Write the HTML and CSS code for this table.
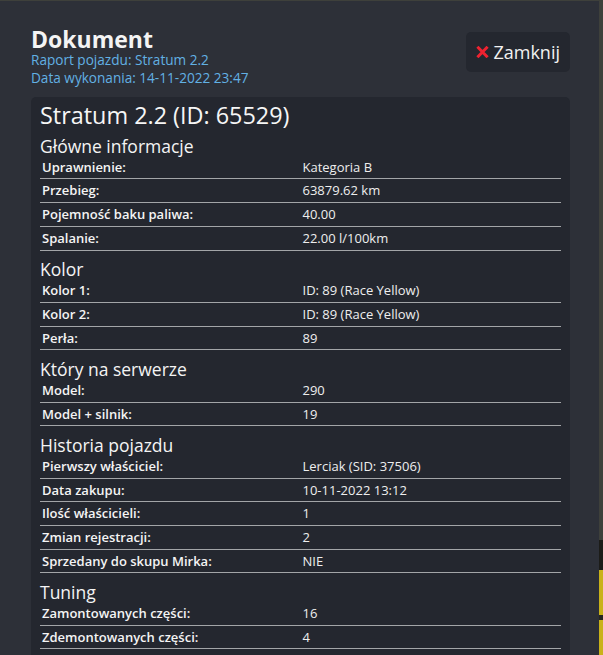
FILE: index.html
```html
<!DOCTYPE html>
<html lang="pl">
<head>
<meta charset="utf-8">
<title>Dokument</title>
<link rel="stylesheet" href="styles.css">
</head>
<body>
<div class="modal">
  <header class="modal-head">
    <div class="titles">
      <h1 class="title">Dokument</h1>
      <p class="sub">Raport pojazdu: Stratum 2.2</p>
      <p class="sub">Data wykonania: 14-11-2022 23:47</p>
    </div>
    <button class="close" type="button">
      <svg class="close-icon" viewBox="0 0 13 12" width="13" height="12" aria-hidden="true"><path d="M1.4 0.8 L11.6 11.2 M11.6 0.8 L1.4 11.2" /></svg>
      <span>Zamknij</span>
    </button>
  </header>
  <div class="doc">
    <h2 class="doc-title">Stratum 2.2 (ID: 65529)</h2>
    <section class="sec first">
      <h3 class="sec-title">Główne informacje</h3>
      <div class="info">
        <div class="row"><span class="k">Uprawnienie:</span><span class="v">Kategoria B</span></div>
        <div class="row"><span class="k">Przebieg:</span><span class="v">63879.62 km</span></div>
        <div class="row"><span class="k">Pojemność baku paliwa:</span><span class="v">40.00</span></div>
        <div class="row"><span class="k">Spalanie:</span><span class="v">22.00 l/100km</span></div>
      </div>
    </section>
    <section class="sec">
      <h3 class="sec-title">Kolor</h3>
      <div class="info">
        <div class="row"><span class="k">Kolor 1:</span><span class="v">ID: 89 (Race Yellow)</span></div>
        <div class="row"><span class="k">Kolor 2:</span><span class="v">ID: 89 (Race Yellow)</span></div>
        <div class="row"><span class="k">Perła:</span><span class="v">89</span></div>
      </div>
    </section>
    <section class="sec">
      <h3 class="sec-title">Który na serwerze</h3>
      <div class="info">
        <div class="row"><span class="k">Model:</span><span class="v">290</span></div>
        <div class="row"><span class="k">Model + silnik:</span><span class="v">19</span></div>
      </div>
    </section>
    <section class="sec">
      <h3 class="sec-title">Historia pojazdu</h3>
      <div class="info">
        <div class="row"><span class="k">Pierwszy właściciel:</span><span class="v">Lerciak (SID: 37506)</span></div>
        <div class="row"><span class="k">Data zakupu:</span><span class="v">10-11-2022 13:12</span></div>
        <div class="row"><span class="k">Ilość właścicieli:</span><span class="v">1</span></div>
        <div class="row"><span class="k">Zmian rejestracji:</span><span class="v">2</span></div>
        <div class="row"><span class="k">Sprzedany do skupu Mirka:</span><span class="v">NIE</span></div>
      </div>
    </section>
    <section class="sec">
      <h3 class="sec-title">Tuning</h3>
      <div class="info">
        <div class="row"><span class="k">Zamontowanych części:</span><span class="v">16</span></div>
        <div class="row"><span class="k">Zdemontowanych części:</span><span class="v">4</span></div>
      </div>
    </section>
  </div>
</div>
</body>
</html>
```
FILE: styles.css
```css
html, body {
  margin: 0;
  padding: 0;
  height: 100%;
  overflow: hidden;
}

body {
  font-family: "Open Sans", "Noto Sans", sans-serif;
  color: #f2f2f2;
  background-color: #3e403b;
  background-image:
    linear-gradient(to bottom, #1c1c18 0, #1c1c18 30px, #c9b21a 30px, #c9b21a 75px, #26261f 75px, #26261f 80px, #c9b21a 80px);
  background-repeat: no-repeat;
  background-size: 4px 115px;
  background-position: right bottom;
}

.modal {
  box-sizing: border-box;
  width: 599px;
  margin-top: 1px;
  min-height: 654px;
  background: #2d3038;
  padding: 26px 29px 0 31px;
}

.modal-head {
  display: flex;
  justify-content: space-between;
  align-items: flex-start;
}

.title {
  margin: 0;
  font-size: 23px;
  line-height: 24px;
  font-weight: 700;
  color: #f4f4f4;
}

.sub {
  margin: 0;
  font-size: 13.6px;
  line-height: 17.7px;
  color: #62b1e4;
}

.close {
  display: flex;
  align-items: center;
  gap: 4px;
  margin-top: 5px;
  height: 40px;
  padding: 0 10px;
  border: 0;
  border-radius: 5px;
  background: #24272f;
  color: #f2f2f2;
  font-family: "Open Sans", "Noto Sans", sans-serif;
  font-size: 18px;
}

.close-icon path {
  fill: none;
  stroke: #ee2230;
  stroke-width: 3;
}

.doc {
  margin-top: 11px;
  background: #24272f;
  border-radius: 5px 5px 0 0;
  padding: 4px 9px 20px 9px;
  min-height: 560px;
}

.doc-title {
  margin: 0;
  font-size: 23.4px;
  line-height: 29px;
  font-weight: 400;
  color: #f6f6f6;
}

.sec {
  margin-top: 8.6px;
}

.sec.first {
  margin-top: 5.3px;
}

.sec-title {
  margin: 0;
  font-size: 17.5px;
  line-height: 20px;
  font-weight: 400;
  color: #f4f4f4;
}

.row {
  display: grid;
  grid-template-columns: 1fr 1fr;
  border-bottom: 1px solid #a3a5a8;
  padding: 1px 0;
  font-size: 13px;
  line-height: 20.7px;
  white-space: nowrap;
}

.k, .v {
  padding: 0 2px;
}

.k {
  font-weight: 600;
  color: #f4f4f4;
}

.v {
  font-weight: 400;
  color: #eeeeee;
}
```
